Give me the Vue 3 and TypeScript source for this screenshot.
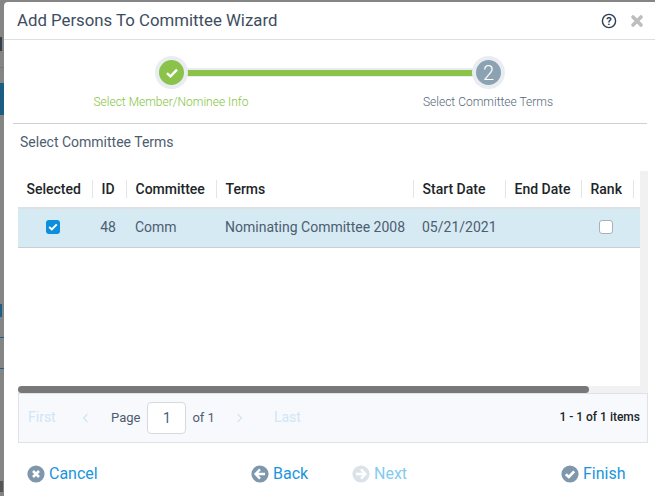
<script setup lang="ts">
interface Column { label: string }
const columns: Column[] = [
  { label: 'Selected' },
  { label: 'ID' },
  { label: 'Committee' },
  { label: 'Terms' },
  { label: 'Start Date' },
  { label: 'End Date' },
  { label: 'Rank' },
  { label: '' },
]
</script>

<template>
  <div class="screen">
    <div class="backdrop" aria-hidden="true">
      <span class="bd bd-a"></span>
      <span class="bd bd-b"></span>
      <span class="bd bd-c"></span>
      <span class="bd bd-d"></span>
      <span class="bd bd-e"></span>
      <span class="bd bd-f"></span>
      <span class="bd bd-g"></span>
    </div>
    <div class="dialog">
      <header class="head">
        <h1 class="title">Add Persons To Committee Wizard</h1>
        <div class="head-icons">
          <svg class="help" width="16" height="16" viewBox="0 0 16 16">
            <circle cx="8" cy="8" r="6.6" fill="none" stroke="#2c3e56" stroke-width="1.4" />
            <text x="8" y="11.6" text-anchor="middle" class="help-q">?</text>
          </svg>
          <svg class="close" width="14" height="14" viewBox="0 0 14 14">
            <path d="M3 3 L11 11 M11 3 L3 11" stroke="#bdbdbd" stroke-width="3.6" stroke-linecap="round" fill="none" />
          </svg>
        </div>
      </header>

      <section class="stepper">
        <div class="track">
          <div class="track-fill"></div>
          <div class="node node-done">
            <svg width="14" height="12" viewBox="0 0 14 12">
              <path d="M2 6.2 L5.4 9.4 L12 2.6" fill="none" stroke="#fff" stroke-width="2.4" />
            </svg>
          </div>
          <div class="node node-todo">2</div>
        </div>
        <div class="step-labels">
          <span class="step-label done">Select Member/Nominee Info</span>
          <span class="step-label todo">Select Committee Terms</span>
        </div>
      </section>

      <div class="body">
        <div class="subtitle">Select Committee Terms</div>
        <div class="grid-wrap">
          <div class="grid-main">
            <div class="grid-head">
              <div v-for="c in columns" :key="c.label" class="th">{{ c.label }}</div>
            </div>
            <div class="grid-row">
              <div class="td center">
                <span class="cb cb-on">
                  <svg width="10" height="8" viewBox="0 0 10 8">
                    <path d="M1.2 4 L3.8 6.4 L8.8 1.4" fill="none" stroke="#fff" stroke-width="2" />
                  </svg>
                </span>
              </div>
              <div class="td right">48</div>
              <div class="td">Comm</div>
              <div class="td">Nominating Committee 2008</div>
              <div class="td">05/21/2021</div>
              <div class="td"></div>
              <div class="td center"><span class="cb cb-off"></span></div>
              <div class="td"></div>
            </div>
          </div>
          <div class="vscroll"></div>
        </div>
        <div class="hscroll"><div class="hthumb"></div></div>
        <div class="pager">
          <span class="pg-link first">First</span>
          <svg class="chev prev" width="7" height="10" viewBox="0 0 7 10"><path d="M5.5 1 L1.5 5 L5.5 9" fill="none" stroke="#cfe6f5" stroke-width="1.2" /></svg>
          <span class="pg-text pg-label">Page</span>
          <span class="pg-input">1</span>
          <span class="pg-text of">of 1</span>
          <svg class="chev next" width="7" height="10" viewBox="0 0 7 10"><path d="M1.5 1 L5.5 5 L1.5 9" fill="none" stroke="#cfe6f5" stroke-width="1.2" /></svg>
          <span class="pg-link last">Last</span>
          <span class="pg-info">1 - 1 of 1 items</span>
        </div>
      </div>

      <footer class="foot">
        <div class="btn btn-cancel">
          <svg width="18" height="18" viewBox="0 0 18 18">
            <circle cx="9" cy="9" r="8.6" fill="#7f97ad" />
            <path d="M6 6 L12 12 M12 6 L6 12" stroke="#fff" stroke-width="2.6" />
          </svg>
          <span>Cancel</span>
        </div>
        <div class="btn btn-back">
          <svg width="18" height="18" viewBox="0 0 18 18">
            <circle cx="9" cy="9" r="8.6" fill="#7f97ad" />
            <path d="M9 4.4 L4.6 9 L9 13.6 M5 9 H14" fill="none" stroke="#fff" stroke-width="2.4" />
          </svg>
          <span>Back</span>
        </div>
        <div class="btn btn-next">
          <svg width="18" height="18" viewBox="0 0 18 18">
            <circle cx="9" cy="9" r="8.6" fill="#dbe3ea" />
            <path d="M9 4.4 L13.4 9 L9 13.6 M13 9 H4" fill="none" stroke="#fff" stroke-width="2.4" />
          </svg>
          <span>Next</span>
        </div>
        <div class="btn btn-finish">
          <svg width="18" height="18" viewBox="0 0 18 18">
            <circle cx="9" cy="9" r="8.6" fill="#7f97ad" />
            <path d="M4.8 9.2 L7.8 12 L13.2 6.4" fill="none" stroke="#fff" stroke-width="2.6" />
          </svg>
          <span>Finish</span>
        </div>
      </footer>
    </div>
  </div>
</template>

<style>
html, body { margin: 0; padding: 0; background: #858585; overflow: hidden; }
</style>

<style scoped>
.screen {
  position: relative;
  width: 655px;
  height: 496px;
  overflow: hidden;
  background: #858585;
  font-family: Roboto, "Liberation Sans", sans-serif;
  padding: 2px 0 0 4px;
  box-sizing: border-box;
}
.backdrop { position: absolute; left: 0; top: 0; width: 4px; height: 496px; }
.bd { position: absolute; left: 0; width: 4px; display: block; }
.bd-a { top: 37px; height: 14px; width: 2px; background: #33404d; }
.bd-b { top: 67px; height: 1px; background: #777; }
.bd-c { top: 83px; height: 32px; background: #1a5c82; }
.bd-d { top: 304px; height: 13px; width: 2px; background: #1f5f85; }
.bd-e { top: 337px; height: 1px; background: #1f5f85; }
.bd-f { top: 368px; height: 1px; background: #1f5f85; }
.bd-g { top: 481px; height: 11px; width: 3px; background: #555; }

.dialog {
  width: 651px;
  height: 494px;
  background: #fff;
  border-radius: 4px 0 0 0;
  display: flex;
  flex-direction: column;
}
.head {
  height: 38px;
  box-sizing: border-box;
  border-bottom: 1px solid #dcdfe2;
  display: flex;
  align-items: center;
  justify-content: space-between;
  padding: 0 11px 0 13px;
  flex: none;
}
.title {
  margin: 0;
  font-size: 16.8px;
  font-weight: 400;
  color: #3d4d61;
  position: relative;
  top: -1px;
}
.head-icons { display: flex; align-items: center; gap: 13px; }
.help-q { font-size: 11px; font-weight: 700; fill: #2c3e56; font-family: Roboto, sans-serif; }

.stepper { flex: none; height: 84px; box-sizing: border-box; border-bottom: 1px solid #cfd2d5; margin: 0 8px 0 9px; position: relative; }
.track {
  position: absolute;
  left: 142px;
  top: 16px;
  width: 350px;
  height: 33px;
  display: flex;
  justify-content: space-between;
  align-items: center;
}
.track-fill {
  position: absolute;
  left: 17px;
  right: 17px;
  top: 12px;
  height: 9px;
  box-sizing: border-box;
  background: #8bc34a;
  border-top: 2px solid #e9edf1;
  border-bottom: 1px solid #e9edf1;
}
.node {
  position: relative;
  width: 25px;
  height: 25px;
  border-radius: 50%;
  border: 4px solid #e9edf1;
  display: flex;
  align-items: center;
  justify-content: center;
  color: #fff;
  font-size: 20px;
  font-weight: 300;
  box-sizing: content-box;
}
.node-done { background: #8bc34a; }
.node-todo { background: #8ba2b2; }
.step-labels {
  position: absolute;
  top: 54px;
  left: 0;
  right: 0;
  height: 16px;
}
.step-label {
  position: absolute;
  top: 0;
  font-size: 12px;
  font-weight: 300;
  line-height: 16px;
  white-space: nowrap;
  transform: translateX(-50%);
}
.step-label.done { left: 158px; color: #84c440; }
.step-label.todo { left: 475px; color: #55687a; }

.body { flex: none; padding: 0 7px 0 14px; }
.subtitle { font-size: 14px; line-height: 18px; color: #4d5d70; margin: 9px 0 0 2px; height: 20px; }
.grid-wrap { display: flex; margin-top: 18px; height: 215px; }
.grid-main { width: 622px; flex: none; }
.vscroll { width: 8px; flex: none; background: #f1f1f1; }
.grid-head, .grid-row {
  display: grid;
  grid-template-columns: 75px 34px 90px 197px 92px 76px 52px 6px;
}
.grid-head { height: 38px; border-bottom: 2px solid #dee0e3; box-sizing: border-box; align-items: end; }
.th {
  height: 18px;
  min-height: 18px;
  margin-bottom: 9px;
  font-size: 14px;
  line-height: 18px;
  font-weight: 500;
  color: #212529;
  padding-left: 8.5px;
  white-space: nowrap;
  border-right: 1px solid #e3e5e7;
  box-sizing: border-box;
}
.th:last-child { border-right: 0; }
.grid-row {
  height: 39px;
  background: #d6eaf3;
  border-bottom: 1px solid #c9cfd3;
  box-sizing: border-box;
  align-items: center;
  padding-bottom: 2px;
}
.td { font-size: 14px; color: #4d5d70; padding-left: 8px; white-space: nowrap; }
.td.center { padding: 0 5px 0 0; display: flex; justify-content: center; }
.td.right { text-align: right; padding: 0 11px 0 0; }
.cb {
  width: 14px;
  height: 14px;
  border-radius: 3px;
  box-sizing: border-box;
  display: flex;
  align-items: center;
  justify-content: center;
}
.cb-on { background: #0d8fdb; }
.cb-off { background: #fff; border: 1px solid #a9b1b8; }

.hscroll { height: 7px; width: 630px; background: #f1f1f1; }
.hthumb { width: 571px; height: 7px; background: #787878; border-radius: 4px; }
.pager {
  width: 630px;
  height: 50px;
  box-sizing: border-box;
  background: #f8f9fd;
  border: 1px solid #dfe3e8;
  display: flex;
  align-items: center;
  font-size: 13px;
  color: #4d5d70;
  padding: 0 7px 0 9px;
  white-space: nowrap;
}
.pg-link { color: #cfe6f5; font-size: 14px; }
.pg-text, .pg-link, .pg-info { position: relative; top: -1px; }
.first { width: 27px; }
.prev { margin-left: 27px; }
.pg-label { margin-left: 22px; }
.pg-input {
  width: 39px;
  height: 32px;
  box-sizing: border-box;
  margin-left: 7px;
  border: 1px solid #d7dadd;
  border-radius: 4px;
  background: #fff;
  display: flex;
  align-items: center;
  justify-content: center;
  font-size: 14px;
  color: #4d5d70;
}
.of { margin-left: 6px; }
.next { margin-left: 21px; }
.last { margin-left: 31px; }
.pg-info { margin-left: auto; color: #212529; font-size: 12px; font-weight: 500; }

.foot { position: relative; flex: none; height: 52px; }
.btn {
  position: absolute;
  top: 22px;
  display: flex;
  align-items: center;
  gap: 4px;
  font-size: 16px;
  line-height: 18px;
  color: #1b95dc;
}
.btn-cancel { left: 23px; }
.btn-back { left: 247px; }
.btn-next { left: 348px; color: #82cbf0; }
.btn-finish { left: 557px; }
</style>
